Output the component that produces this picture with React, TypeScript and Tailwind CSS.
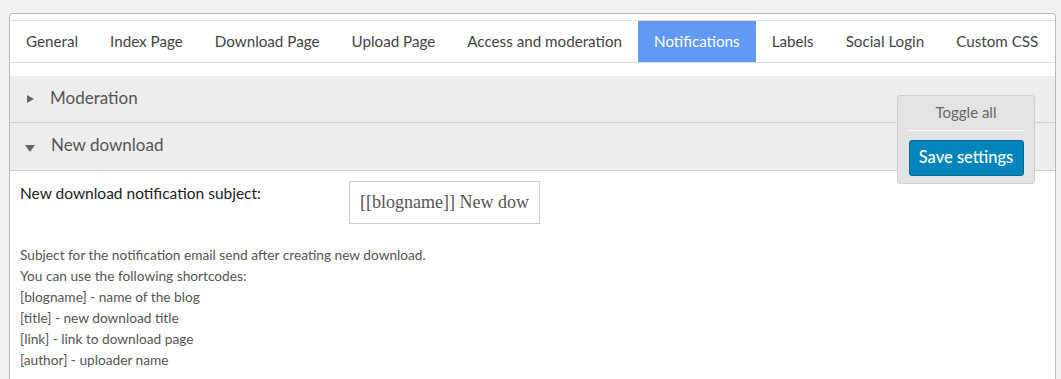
const tabs = [
  "General",
  "Index Page",
  "Download Page",
  "Upload Page",
  "Access and moderation",
  "Notifications",
  "Labels",
  "Social Login",
  "Custom CSS",
];

const shortcodes = [
  "Subject for the notification email send after creating new download.",
  "You can use the following shortcodes:",
  "[blogname] - name of the blog",
  "[title] - new download title",
  "[link] - link to download page",
  "[author] - uploader name",
];

export default function App() {
  return (
    <main className="min-h-[379px] bg-[#f1f1f1] pt-[13px] pl-[9px] pr-[5px] font-['Lato',sans-serif]">
      <div className="relative rounded-t-[4px] border border-b-0 border-[#b9b9b9] bg-white pt-[6px] min-h-[366px]">
        {/* tabs */}
        <nav className="flex h-[43px] overflow-hidden border-y border-[#dcdcdc]">
          {tabs.map((tab) => (
            <div
              key={tab}
              className={`flex shrink-0 items-center whitespace-nowrap px-4 text-[15.2px] ${
                tab === "Notifications"
                  ? "bg-[#6199f7] text-white"
                  : "text-[#444]"
              }`}
            >
              {tab}
            </div>
          ))}
        </nav>

        <div className="mt-[13px]">
          <div className="flex h-[47px] items-center border-b border-[#cfcfcf] bg-[#ededed] pb-[3px] pl-[17px] text-[17px] text-[#555]">
            <span className="mr-[16px] mt-[3px] h-0 w-0 border-y-[4px] border-l-[7px] border-y-transparent border-l-[#666]" />
            Moderation
          </div>
          <div className="flex h-[48px] items-center border-b border-[#cfcfcf] bg-[#ededed] pb-[3px] pl-[15px] text-[17px] text-[#555]">
            <span className="mr-[16px] mt-[6px] h-0 w-0 border-x-[5px] border-t-[7px] border-x-transparent border-t-[#666]" />
            New download
          </div>
        </div>

        <div className="px-[10px] pt-[10px]">
          <div className="flex">
            <label className="w-[329px] pt-[1px] text-[15.5px] text-[#222]">
              New download notification subject:
            </label>
            <div className="flex h-[43px] w-[191px] items-center overflow-hidden whitespace-nowrap border border-[#cccccc] px-[10px] font-['Liberation_Serif',serif] text-[18px] text-[#555]">
              [[blogname]] New dow
            </div>
          </div>
          <div className="mt-[20px] text-[13.7px] leading-[21px] text-[#555]">
            {shortcodes.map((line) => (
              <p key={line}>{line}</p>
            ))}
          </div>
        </div>

        {/* floating toggle panel */}
        <div className="absolute left-[887px] top-[81px] w-[138px] rounded-[3px] border border-[#cfcfdc] bg-[#e3e3e3] px-[9px] pb-[7px]">
          <div className="pt-[5px] pb-[6px] text-center text-[15px] text-[#666]">
            Toggle all
          </div>
          <div className="border-t border-[#fafafa]" />
          <button
            type="button"
            className="mx-auto mt-[9px] block h-[36px] w-[115px] rounded-[3px] border border-[#006799] bg-[#0085ba] text-[16.5px] font-medium text-white"
          >
            Save settings
          </button>
        </div>
      </div>
    </main>
  );
}
